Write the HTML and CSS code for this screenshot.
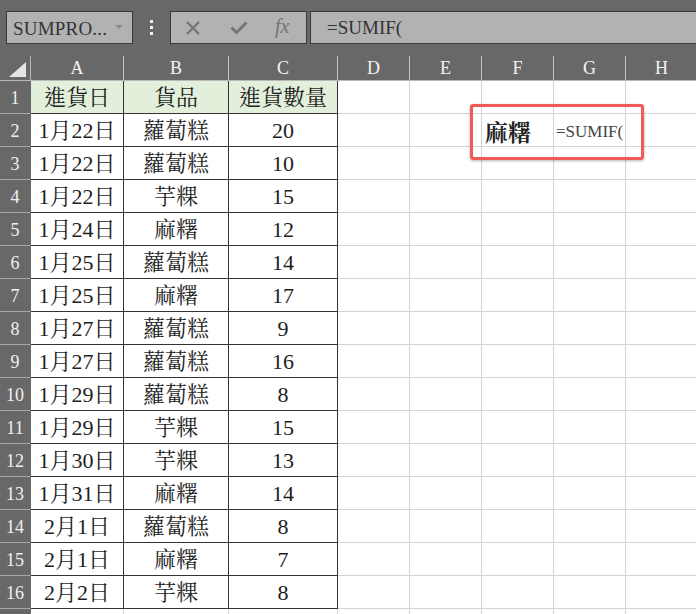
FILE: index.html
```html
<!DOCTYPE html>
<html lang="zh-Hant">
<head>
<meta charset="utf-8">
<title>SUMIF</title>
<link rel="stylesheet" href="styles.css">
</head>
<body>
<div class="app">
  <div class="toolbar">
    <div class="namebox"><span class="nametext">SUMPRO...</span><span class="caret"></span></div>
    <div class="dots"><i></i><i></i><i></i></div>
    <div class="fbtns">
      <svg class="ico x" width="16" height="14" viewBox="0 0 16 14"><path d="M2 1 L14 13 M14 1 L2 13" stroke="#747474" stroke-width="2.2" fill="none"/></svg>
      <svg class="ico ok" width="18" height="14" viewBox="0 0 18 14"><path d="M1.5 6.5 L6.5 11.5 L16.5 1.5" stroke="#747474" stroke-width="3" fill="none"/></svg>
      <span class="fx">fx</span>
    </div>
    <div class="fbar">=SUMIF(</div>
  </div>
  <div class="sheet">
    <div class="corner"><svg width="30" height="24" viewBox="0 0 30 24"><polygon points="26,6 26,21 9,21" fill="#e4e4e4"/></svg></div>
    <div class="ch">A</div><div class="ch">B</div><div class="ch">C</div><div class="ch">D</div><div class="ch">E</div><div class="ch">F</div><div class="ch">G</div><div class="ch">H</div>

    <div class="rh">1</div><div class="d h">進貨日</div><div class="d h">貨品</div><div class="d h">進貨數量</div><div class="c"></div><div class="c"></div><div class="c"></div><div class="c"></div><div class="c"></div>
    <div class="rh">2</div><div class="d">1月22日</div><div class="d">蘿蔔糕</div><div class="d">20</div><div class="c"></div><div class="c"></div><div class="c key">麻糬</div><div class="c formula">=SUMIF(</div><div class="c"></div>
    <div class="rh">3</div><div class="d">1月22日</div><div class="d">蘿蔔糕</div><div class="d">10</div><div class="c"></div><div class="c"></div><div class="c"></div><div class="c"></div><div class="c"></div>
    <div class="rh">4</div><div class="d">1月22日</div><div class="d">芋粿</div><div class="d">15</div><div class="c"></div><div class="c"></div><div class="c"></div><div class="c"></div><div class="c"></div>
    <div class="rh">5</div><div class="d">1月24日</div><div class="d">麻糬</div><div class="d">12</div><div class="c"></div><div class="c"></div><div class="c"></div><div class="c"></div><div class="c"></div>
    <div class="rh">6</div><div class="d">1月25日</div><div class="d">蘿蔔糕</div><div class="d">14</div><div class="c"></div><div class="c"></div><div class="c"></div><div class="c"></div><div class="c"></div>
    <div class="rh">7</div><div class="d">1月25日</div><div class="d">麻糬</div><div class="d">17</div><div class="c"></div><div class="c"></div><div class="c"></div><div class="c"></div><div class="c"></div>
    <div class="rh">8</div><div class="d">1月27日</div><div class="d">蘿蔔糕</div><div class="d">9</div><div class="c"></div><div class="c"></div><div class="c"></div><div class="c"></div><div class="c"></div>
    <div class="rh">9</div><div class="d">1月27日</div><div class="d">蘿蔔糕</div><div class="d">16</div><div class="c"></div><div class="c"></div><div class="c"></div><div class="c"></div><div class="c"></div>
    <div class="rh">10</div><div class="d">1月29日</div><div class="d">蘿蔔糕</div><div class="d">8</div><div class="c"></div><div class="c"></div><div class="c"></div><div class="c"></div><div class="c"></div>
    <div class="rh">11</div><div class="d">1月29日</div><div class="d">芋粿</div><div class="d">15</div><div class="c"></div><div class="c"></div><div class="c"></div><div class="c"></div><div class="c"></div>
    <div class="rh">12</div><div class="d">1月30日</div><div class="d">芋粿</div><div class="d">13</div><div class="c"></div><div class="c"></div><div class="c"></div><div class="c"></div><div class="c"></div>
    <div class="rh">13</div><div class="d">1月31日</div><div class="d">麻糬</div><div class="d">14</div><div class="c"></div><div class="c"></div><div class="c"></div><div class="c"></div><div class="c"></div>
    <div class="rh">14</div><div class="d">2月1日</div><div class="d">蘿蔔糕</div><div class="d">8</div><div class="c"></div><div class="c"></div><div class="c"></div><div class="c"></div><div class="c"></div>
    <div class="rh">15</div><div class="d">2月1日</div><div class="d">麻糬</div><div class="d">7</div><div class="c"></div><div class="c"></div><div class="c"></div><div class="c"></div><div class="c"></div>
    <div class="rh">16</div><div class="d">2月2日</div><div class="d">芋粿</div><div class="d">8</div><div class="c"></div><div class="c"></div><div class="c"></div><div class="c"></div><div class="c"></div>
    <div class="rh"></div><div class="c"></div><div class="c"></div><div class="c"></div><div class="c"></div><div class="c"></div><div class="c"></div><div class="c"></div><div class="c"></div>
  </div>
  <div class="callout"></div>
</div>
</body>
</html>
```
FILE: styles.css
```css
* { box-sizing: border-box; }
html, body { margin: 0; padding: 0; background: #fff; }
body { width: 696px; height: 614px; overflow: hidden; }
.app {
  position: relative;
  width: 696px;
  height: 614px;
  overflow: hidden;
  font-family: "Liberation Serif", "Noto Serif CJK TC", "Noto Sans CJK TC", serif;
  color: #1e1e1e;
}
.toolbar {
  height: 56px;
  background: #686868;
  display: flex;
  align-items: flex-start;
  padding: 11px 0 0 6px;
}
.namebox {
  width: 127px;
  height: 33px;
  background: #b2b2b2;
  border: 1px solid #3a3a3a;
  display: flex;
  align-items: center;
  padding-left: 6px;
  position: relative;
}
.nametext {
  font-size: 19px;
  color: #333;
  letter-spacing: 0.2px;
  margin-top: 2px;
}
.caret {
  position: absolute;
  right: 9px;
  top: 13px;
  width: 0; height: 0;
  border-left: 4px solid transparent;
  border-right: 4px solid transparent;
  border-top: 4px solid #8a8a8a;
}
.dots {
  width: 37px;
  height: 33px;
  display: flex;
  flex-direction: column;
  align-items: center;
  justify-content: center;
  gap: 3px;
}
.dots i {
  display: block;
  width: 3px;
  height: 3px;
  background: #f0f0f0;
}
.fbtns {
  width: 137px;
  height: 33px;
  background: #b2b2b2;
  border: 1px solid #3a3a3a;
  display: flex;
  align-items: center;
  padding: 0 0 0 14px;
}
.ico { display: block; }
.ok { margin-left: 29px; }
.fx {
  font-style: italic;
  font-size: 20px;
  color: #747474;
  font-family: "Liberation Serif", serif;
  margin: -2px 0 0 27px;
}
.fbar {
  margin-left: 3px;
  flex: 1;
  margin-right: -10px;
  height: 33px;
  background: #b2b2b2;
  border: 1px solid #3a3a3a;
  font-size: 19px;
  color: #333;
  padding: 5px 0 0 16px;
}
.sheet {
  display: grid;
  grid-template-columns: 31px 93px 105px 109px 72px 72px 72px 72px 72px;
  grid-template-rows: 25px repeat(17, 33px);
  width: 698px;
}
.corner {
  background: #686868;
  border-right: 1px solid #b8b8b8;
  border-bottom: 1px solid #b8b8b8;
}
.corner svg { display: block; }
.ch {
  background: #686868;
  color: #f4f4f4;
  border-right: 1px solid #c4c4c4;
  border-bottom: 1px solid #b8b8b8;
  font-size: 18px;
  display: flex;
  align-items: center;
  justify-content: center;
  padding-top: 1px;
}
.rh {
  background: #686868;
  color: #f0f0f0;
  border-right: 1px solid #686868;
  border-bottom: 1px solid #a8a8a8;
  font-size: 18px;
  display: flex;
  align-items: flex-end;
  justify-content: center;
  padding-bottom: 4px;
}
.c {
  border-right: 1px solid #d4d4d4;
  border-bottom: 1px solid #d4d4d4;
  display: flex;
  align-items: center;
  white-space: nowrap;
}
.d {
  border-right: 1px solid #333;
  border-bottom: 1px solid #333;
  font-size: 22px;
  line-height: 1;
  display: flex;
  align-items: flex-end;
  justify-content: center;
  padding-bottom: 4px;
  white-space: nowrap;
}
.h { background: #e2efda; }
.key {
  font-size: 23px;
  font-weight: bold;
  padding: 2px 0 0 3px;
  color: #222;
}
.formula {
  font-size: 17px;
  color: #444;
  padding: 4px 0 0 2px;
  overflow: visible;
}
.callout {
  position: absolute;
  left: 470px;
  top: 104px;
  width: 174px;
  height: 56px;
  border: 3px solid #f25a5a;
  border-radius: 3px;
  box-shadow: 0 1px 3px rgba(0,0,0,0.3);
}
```
